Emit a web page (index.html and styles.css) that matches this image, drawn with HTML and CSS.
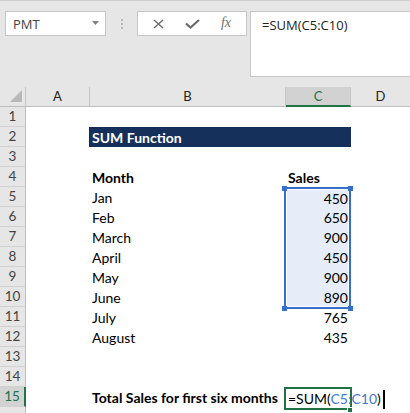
FILE: index.html
```html
<!DOCTYPE html>
<html>
<head>
<meta charset="utf-8">
<link rel="stylesheet" href="styles.css">
</head>
<body>
<div class="app">
  <div class="toolbar">
    <div class="namebox">
      <span>PMT</span>
      <svg class="dd" width="7" height="4" viewBox="0 0 7 4"><polygon points="0,0 7,0 3.5,4" fill="#808080"/></svg>
    </div>
    <div class="grip"></div>
    <div class="fbtns">
      <span class="btn"><svg width="11" height="10" viewBox="0 0 11 10"><path d="M1 1 L10 9 M10 1 L1 9" stroke="#6b6b6b" stroke-width="1.4" fill="none"/></svg></span>
      <span class="btn"><svg width="15" height="10" viewBox="0 0 15 10"><path d="M1 4.5 L5.5 8.5 L14 1" stroke="#6b6b6b" stroke-width="2.2" fill="none"/></svg></span>
      <span class="btn fx">fx</span>
    </div>
    <div class="fbox">=SUM(C5:C10)</div>
  </div>

  <div class="sheet">
    <div class="ch corner"><svg width="26" height="19" viewBox="0 0 26 19"><polygon points="22,3 22,15 10,15" fill="#b9b9b9"/></svg></div>
    <div class="ch">A</div>
    <div class="ch">B</div>
    <div class="ch csel">C</div>
    <div class="ch last">D</div>

    <div class="rh">1</div><div class="c"></div><div class="c"></div><div class="c"></div><div class="c"></div>

    <div class="rh">2</div><div class="c"></div><div class="c title">SUM Function</div><div class="c"></div>

    <div class="rh">3</div><div class="c"></div><div class="c"></div><div class="c"></div><div class="c"></div>

    <div class="rh">4</div><div class="c"></div><div class="c b">Month</div><div class="c b">Sales</div><div class="c"></div>

    <div class="rh">5</div><div class="c"></div><div class="c">Jan</div><div class="c num sel sel-top"><span class="h h-tl"></span><span class="h h-tr"></span>450</div><div class="c"></div>
    <div class="rh">6</div><div class="c"></div><div class="c">Feb</div><div class="c num sel">650</div><div class="c"></div>
    <div class="rh">7</div><div class="c"></div><div class="c">March</div><div class="c num sel">900</div><div class="c"></div>
    <div class="rh">8</div><div class="c"></div><div class="c">April</div><div class="c num sel">450</div><div class="c"></div>
    <div class="rh">9</div><div class="c"></div><div class="c">May</div><div class="c num sel">900</div><div class="c"></div>
    <div class="rh">10</div><div class="c"></div><div class="c">June</div><div class="c num sel sel-bot"><span class="h h-bl"></span><span class="h h-br"></span>890</div><div class="c"></div>
    <div class="rh">11</div><div class="c"></div><div class="c">July</div><div class="c num">765</div><div class="c"></div>
    <div class="rh">12</div><div class="c"></div><div class="c">August</div><div class="c num">435</div><div class="c"></div>
    <div class="rh">13</div><div class="c"></div><div class="c"></div><div class="c"></div><div class="c"></div>
    <div class="rh">14</div><div class="c"></div><div class="c"></div><div class="c"></div><div class="c"></div>
    <div class="rh rsel">15</div><div class="c"></div><div class="c b">Total Sales for first six months</div><div class="c active">=SUM(<span class="ref">C5:C10</span>)<span class="caret"></span><span class="h h-act"></span></div><div class="c"></div>
    <div class="rh"></div><div class="c"></div><div class="c"></div><div class="c"></div><div class="c"></div>
  </div>
</div>
</body>
</html>
```

FILE: styles.css
```css
* { box-sizing: border-box; }
html, body { margin: 0; padding: 0; background: #fff; }
body { overflow: hidden; font-family: Lato, "Liberation Sans", sans-serif; }
.app { width: 410px; height: 413px; overflow: hidden; }

.toolbar {
  height: 87px;
  background: #e6e6e6;
  border-top: 1px solid #cfcfcf;
  padding-top: 10px;
  display: flex;
  align-items: flex-start;
}
.namebox {
  margin-left: 5px;
  width: 101px;
  height: 25px;
  background: #fff;
  border: 1px solid #c6c6c6;
  display: flex;
  align-items: center;
  justify-content: space-between;
  padding: 0 6px 0 7px;
  font: 13px "Open Sans", sans-serif;
  color: #444;
}
.dd { margin-top: -1px; }
.grip {
  margin-left: 15px;
  margin-top: 8px;
  width: 2px;
  height: 10px;
  background: repeating-linear-gradient(#b8b8b8 0 2px, transparent 2px 4px);
}
.fbtns {
  margin-left: 14px;
  width: 110px;
  height: 25px;
  background: #fff;
  border: 1px solid #c6c6c6;
  display: flex;
  align-items: center;
  padding-left: 3px;
}
.btn {
  width: 34px;
  display: flex;
  justify-content: center;
  align-items: center;
}
.fx {
  font: italic 14px "Liberation Serif", serif;
  color: #707070;
  margin-top: -2px;
}
.fbox {
  margin-left: 3px;
  flex: 1;
  height: 66px;
  background: #fff;
  border: 1px solid #c6c6c6;
  border-right: none;
  padding: 3px 0 0 11px;
  font: 13px/20px "Open Sans", sans-serif;
  color: #222;
}

.sheet {
  display: grid;
  grid-template-columns: 26px 64px 196px 65px 1fr;
  grid-auto-rows: 20px;
  background: #fff;
}
.ch {
  background: #e6e6e6;
  border-right: 1px solid #c6c6c6;
  border-bottom: 1px solid #bdbdbd;
  text-align: center;
  font-size: 13px;
  line-height: 19px;
  color: #222;
}
.ch.last { border-right: none; }
.corner { padding: 0; line-height: 0; }
.csel {
  background: #d2d2d2;
  border-bottom: 2px solid #217346;
  color: #217346;
}
.rh {
  background: #e6e6e6;
  border-right: 1px solid #bdbdbd;
  border-bottom: 1px solid #d0d0d0;
  text-align: center;
  font-size: 13.5px;
  line-height: 19px;
  color: #444;
}
.rsel {
  background: #d2d2d2;
  border-right: 2px solid #217346;
  color: #217346;
}
.c {
  padding: 1px 3px 0 2px;
  font-size: 14px;
  line-height: 19px;
  color: #000;
  white-space: nowrap;
}
.b { font-weight: bold; }
.title {
  grid-column: span 2;
  background: #15305b;
  color: #fff;
  font-weight: bold;
  margin-left: -1px;
  padding-left: 3px;
}
.num { text-align: right; }

.sel {
  position: relative;
  margin-left: -2px;
  background: #e6edf8;
  border-left: 2px solid #356fc9;
  border-right: 2px solid #356fc9;
  padding-right: 1px;
  box-shadow: inset 1px 0 #fff, inset -1px 0 #fff;
}
.sel-top {
  border-top: 2px solid #356fc9;
  padding-top: 0;
  box-shadow: inset 1px 0 #fff, inset -1px 0 #fff, inset 0 1px #fff;
}
.sel-bot {
  margin-bottom: -2px;
  border-bottom: 2px solid #356fc9;
  box-shadow: inset 1px 0 #fff, inset -1px 0 #fff, inset 0 -1px #fff;
}
.h {
  position: absolute;
  width: 5px;
  height: 5px;
  background: #356fc9;
}
.h-tl { left: -4px; top: -3px; }
.h-tr { right: -4px; top: -3px; }
.h-bl { left: -4px; bottom: -4px; }
.h-br { right: -4px; bottom: -4px; }

.active {
  position: relative;
  margin: 0 -1px -3px -2px;
  border: 2px solid #217346;
  padding: 0 0 0 2px;
  overflow: visible;
}
.ref { color: #3f79d1; }
.caret {
  display: inline-block;
  width: 2px;
  height: 19px;
  background: #000;
  vertical-align: -5px;
  margin-left: 2px;
}
.h-act {
  background: #217346;
  right: -3px;
  bottom: -5px;
  border: 1px solid #fff;
  width: 6px;
  height: 6px;
}
```
